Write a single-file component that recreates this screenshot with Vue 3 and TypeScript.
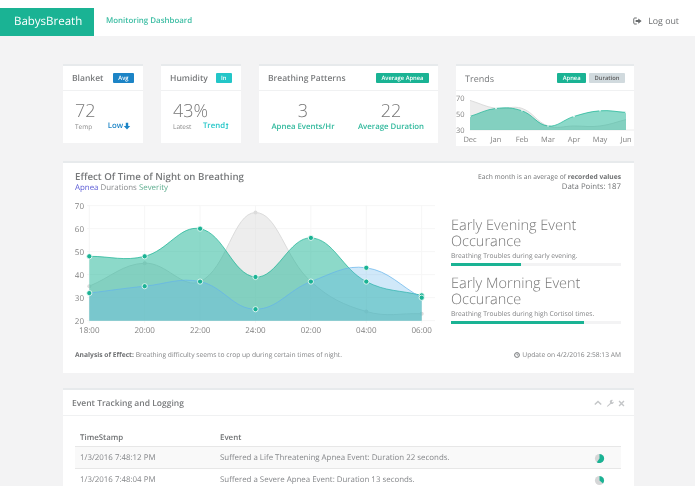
<script setup lang="ts">
type Pt = { x: number; y: number }

function spline(pts: Pt[], t = 0.4, bottom = 9999): string {
  const ctrl = pts.map((p, i) => {
    const prev = pts[i - 1] ?? p
    const next = pts[i + 1] ?? p
    const d1 = Math.hypot(p.x - prev.x, p.y - prev.y)
    const d2 = Math.hypot(next.x - p.x, next.y - p.y)
    const sum = d1 + d2 || 1
    const fa = (t * d1) / sum
    const fb = (t * d2) / sum
    return {
      ix: p.x - fa * (next.x - prev.x),
      iy: Math.min(bottom, p.y - fa * (next.y - prev.y)),
      ox: p.x + fb * (next.x - prev.x),
      oy: Math.min(bottom, p.y + fb * (next.y - prev.y)),
    }
  })
  let d = `M${pts[0].x} ${pts[0].y}`
  for (let i = 1; i < pts.length; i++) {
    d += ` C${ctrl[i - 1].ox} ${ctrl[i - 1].oy} ${ctrl[i].ix} ${ctrl[i].iy} ${pts[i].x} ${pts[i].y}`
  }
  return d
}

function makeSeries(vals: number[], fx: (i: number) => number, fy: (v: number) => number, base: number) {
  const pts = vals.map((v, i) => ({ x: fx(i), y: fy(v) }))
  const line = spline(pts, 0.4, base)
  return {
    pts,
    line,
    area: `${line} L${pts[pts.length - 1].x} ${base} L${pts[0].x} ${base} Z`,
  }
}

const mx = (i: number) => 14.3 + i * 55.4
const my = (v: number) => 122.7 - (v - 20) * 2.3
const mainGray = makeSeries([35, 45, 37, 67, 37, 24, 23], mx, my, 122.7)
const mainGreen = makeSeries([48, 48, 60, 39, 56, 37, 31], mx, my, 122.7)
const mainBlue = makeSeries([32, 35, 37, 25, 37, 43, 30], mx, my, 122.7)
const mainX = ['18:00', '20:00', '22:00', '24:00', '02:00', '04:00', '06:00']
const mainY = [70, 60, 50, 40, 30, 20]

const tx = (i: number) => 14 + i * 26
const ty = (v: number) => 39 - (v - 30) * 0.8
const trendGray = makeSeries([67, 57, 57, 35, 35, 35, 43], tx, ty, 39)
const trendGreen = makeSeries([47, 57, 54, 35, 47, 54, 52], tx, ty, 39)
const trendX = ['Dec', 'Jan', 'Feb', 'Mar', 'Apr', 'May', 'Jun']

function pie(frac: number, r = 5): string {
  const a = frac * 2 * Math.PI
  const x = 6 + r * Math.sin(a)
  const y = 6 - r * Math.cos(a)
  return `M6 6 L6 ${6 - r} A${r} ${r} 0 ${frac > 0.5 ? 1 : 0} 1 ${x} ${y} Z`
}

const rows = [
  { time: '1/3/2016 7:48:12 PM', event: 'Suffered a Life Threatening Apnea Event: Duration 22 seconds.', frac: 0.6 },
  { time: '1/3/2016 7:48:04 PM', event: 'Suffered a Severe Apnea Event: Duration 13 seconds.', frac: 0.36 },
]
</script>

<template>
  <div class="page">
    <header class="nav">
      <div class="brand">BabysBreath</div>
      <div class="nav-title">Monitoring Dashboard</div>
      <div class="logout">
        <svg class="logout-icon" viewBox="0 0 12 10" width="9" height="8">
          <path d="M5 1H2.2C1.5 1 1 1.5 1 2.2v5.6C1 8.500 1.500 9 2.200 9H5" fill="none" stroke="#676a6c" stroke-width="1.300" />
          <path d="M3.500 3.800H7V1.500L11.500 5 7 8.500V6.200H3.500Z" fill="#676a6c" />
        </svg>
        <span>Log out</span>
      </div>
    </header>

    <section class="stats">
      <article class="card small">
        <div class="card-head"><h5>Blanket</h5><span class="tag tag-blue">Avg</span></div>
        <div class="stat-body">
          <div class="stat-left"><div class="big">72</div><div class="tiny">Temp</div></div>
          <div class="trend blue">Low<svg viewBox="0 0 10 10" width="8" height="8"><path d="M3.500 1h3v4h2.500L5 9.500 1 5h2.500Z" fill="#1c84c6" /></svg></div>
        </div>
      </article>
      <article class="card small">
        <div class="card-head"><h5>Humidity</h5><span class="tag tag-info">In</span></div>
        <div class="stat-body">
          <div class="stat-left"><div class="big">43%</div><div class="tiny">Latest</div></div>
          <div class="trend info">Trend<svg viewBox="0 0 6 10" width="4" height="8"><path d="M3 .5 5.500 3.500H4V9.500H.8V8.300H2.500V3.500H1Z" fill="#23c6c8" /></svg></div>
        </div>
      </article>
      <article class="card patterns">
        <div class="card-head"><h5>Breathing Patterns</h5><span class="tag tag-green">Average Apnea</span></div>
        <div class="duo">
          <div class="duo-item"><div class="big">3</div><div class="duo-label">Apnea Events/Hr</div></div>
          <div class="duo-item"><div class="big">22</div><div class="duo-label">Average Duration</div></div>
        </div>
      </article>
      <article class="card trends">
        <div class="card-head">
          <h5 class="light">Trends</h5>
          <div class="tags"><span class="tag tag-green">Apnea</span><span class="tag tag-gray">Duration</span></div>
        </div>
        <svg class="trend-chart" viewBox="0 0 178 55" width="178" height="55">
          <text x="0" y="10" class="tk">70</text>
          <text x="0" y="26" class="tk">50</text>
          <text x="0" y="42" class="tk">30</text>
          <path d="M14 39H178" stroke="#ececec" stroke-width="1" />
          <path :d="trendGray.area" fill="rgba(220,220,220,.5)" stroke="none" />
          <path :d="trendGray.line" fill="none" stroke="#dcdcdc" stroke-width="1" />
          <path :d="trendGreen.area" fill="rgba(26,179,148,.5)" stroke="none" />
          <path :d="trendGreen.line" fill="none" stroke="rgba(26,179,148,.7)" stroke-width="1" />
          <circle v-for="(p, i) in trendGreen.pts" :key="i" :cx="p.x" :cy="p.y" r=".8" fill="#fff" />
          <text v-for="(m, i) in trendX" :key="m" :x="i === 6 ? 170 : tx(i)" y="51" class="tk" text-anchor="middle">{{ m }}</text>
        </svg>
      </article>
    </section>

    <section class="card main">
      <div class="main-head">
        <div>
          <h3>Effect Of Time of Night on Breathing</h3>
          <div class="legend"><span class="c-indigo">Apnea</span> Durations <span class="c-sage">Severity</span></div>
        </div>
        <div class="main-note">
          <div class="note-a">Each month is an average of <b>recorded values</b></div>
          <div class="note-b">Data Points: 187</div>
        </div>
      </div>
      <div class="main-body">
        <svg class="main-chart" viewBox="0 0 360 140" width="360" height="140">
          <g stroke="#f6f6f6" stroke-width="1">
            <path v-for="v in mainY" :key="v" :d="`M12 ${my(v)}H360`" />
            <path v-for="(l, i) in mainX" :key="l" :d="`M${mx(i)} 7V125`" />
          </g>
          <text v-for="v in mainY" :key="v" x="9" :y="my(v) + 3" class="tick" text-anchor="end">{{ v }}</text>
          <text v-for="(l, i) in mainX" :key="l" :x="mx(i)" y="135" class="tick" text-anchor="middle">{{ l }}</text>
          <path :d="mainGray.area" fill="rgba(220,220,220,.5)" />
          <path :d="mainGray.line" fill="none" stroke="#dcdcdc" stroke-width="1" />
          <circle v-for="(p, i) in mainGray.pts" :key="i" :cx="p.x" :cy="p.y" r="2" fill="#dcdcdc" />
          <path :d="mainGreen.area" fill="rgba(26,179,148,.5)" />
          <path :d="mainGreen.line" fill="none" stroke="rgba(26,179,148,.7)" stroke-width="1" />
          <path :d="mainBlue.area" fill="rgba(100,180,235,.3)" />
          <path :d="mainBlue.line" fill="none" stroke="rgba(100,180,235,.7)" stroke-width="1" />
          <circle v-for="(p, i) in mainGreen.pts" :key="i" :cx="p.x" :cy="p.y" r="2.600" fill="#1ab394" stroke="#fff" stroke-width=".8" />
          <circle v-for="(p, i) in mainBlue.pts" :key="i" :cx="p.x" :cy="p.y" r="2.600" fill="#1ab394" stroke="#fff" stroke-width=".8" />
        </svg>
        <div class="side">
          <div class="side-block">
            <h2>Early Evening Event Occurance</h2>
            <small>Breathing Troubles during early evening.</small>
            <div class="bar"><div class="bar-fill" :style="{ width: '41%' }"></div></div>
          </div>
          <div class="side-block">
            <h2>Early Morning Event Occurance</h2>
            <small>Breathing Troubles during high Cortisol times.</small>
            <div class="bar"><div class="bar-fill" :style="{ width: '78%' }"></div></div>
          </div>
        </div>
      </div>
      <div class="main-foot">
        <div><b>Analysis of Effect:</b> Breathing difficulty seems to crop up during certain times of night.</div>
        <div class="update">
          <svg viewBox="0 0 10 10" width="6" height="6"><circle cx="5" cy="5" r="4" fill="none" stroke="#676a6c" stroke-width="1.500" /><path d="M5 2.500V5H7.200" fill="none" stroke="#676a6c" stroke-width="1.100" /></svg>
          Update on 4/2/2016 2:58:13 AM
        </div>
      </div>
    </section>

    <section class="card log">
      <div class="card-head log-head">
        <h5>Event Tracking and Logging</h5>
        <div class="tools">
          <svg viewBox="0 0 10 7" width="8" height="6"><path d="M1 5.500 5 1.500l4 4" fill="none" stroke="#c4c6c8" stroke-width="1.800" /></svg>
          <svg viewBox="0 0 10 10" width="8" height="8"><path d="M1 9.200 5.200 5a2.700 2.700 0 0 1 3.600-3.800L7.200 2.900l.5 1.100 1.100.2L9.600 3a2.700 2.700 0 0 1-3.500 3.200L2 9.800Z" fill="#c4c6c8" /></svg>
          <svg viewBox="0 0 10 10" width="7" height="7"><path d="M1.500 1.500l7 7M8.500 1.500l-7 7" fill="none" stroke="#c4c6c8" stroke-width="2" /></svg>
        </div>
      </div>
      <div class="table-wrap">
        <table>
          <thead><tr><th class="col-time">TimeStamp</th><th>Event</th><th class="col-pie"></th></tr></thead>
          <tbody>
            <tr v-for="r in rows" :key="r.time">
              <td>{{ r.time }}</td>
              <td>{{ r.event }}</td>
              <td class="pie-cell">
                <svg viewBox="0 0 12 12" width="11" height="11">
                  <circle cx="6" cy="6" r="5" fill="#d5d6d7" />
                  <path :d="pie(r.frac)" fill="#1ab394" />
                </svg>
              </td>
            </tr>
          </tbody>
        </table>
      </div>
    </section>
  </div>
</template>

<style scoped>
.page {
  height: 486px;
  overflow: hidden;
  background: #f3f3f4;
  font-family: "Open Sans", "Liberation Sans", sans-serif;
  color: #6f7173;
  font-size: 8px;
  text-rendering: geometricPrecision;
  filter: blur(0.35px);
}
.nav {
  height: 36px;
  padding-top: 8px;
  box-sizing: border-box;
  background: #fff;
  display: flex;
  align-items: stretch;
}
.brand {
  width: 94px;
  box-sizing: border-box;
  padding-left: 14px;
  background: #1ab394;
  color: #fff;
  font-size: 11.500px;
  line-height: 28px;
}
.nav-title {
  margin-left: 12px;
  color: #3cbda3;
  font-size: 7.900px;
  font-weight: 600;
  line-height: 27px;
}
.logout {
  margin-left: auto;
  padding-right: 16px;
  display: flex;
  align-items: center;
  gap: 6px;
  font-size: 8.800px;
  padding-bottom: 2px;
}
.stats {
  display: flex;
  align-items: flex-start;
  gap: 18px;
  padding: 28px 61px 0 63px;
}
.card {
  box-sizing: border-box;
  background: #fff;
  border-top: 2px solid #e7eaec;
}
.small { width: 80px; height: 79px; }
.patterns { width: 179px; height: 79px; }
.trends { width: 178px; height: 82px; }
.card-head {
  height: 24px;
  box-sizing: content-box;
  border-bottom: 1px solid #f0f1f2;
  padding: 0 9px;
  display: flex;
  align-items: center;
  justify-content: space-between;
}
h5 {
  margin: 0;
  font-size: 8.500px;
  font-weight: 600;
  white-space: nowrap;
  color: #77797b;
}
h5.light { font-weight: 400; font-size: 9px; }
.tag {
  font-size: 5.800px;
  font-weight: 600;
  line-height: 10px;
  padding: 0 5.500px;
  border-radius: 1px;
  color: #fff;
  white-space: nowrap;
}
.tag-blue { background: #1c84c6; }
.tag-info { background: #23c6c8; }
.tag-green { background: #1ab394; }
.tag-gray { background: #d1dade; color: #5e5e5e; }
.tags { display: flex; gap: 3px; }
.stat-body {
  display: flex;
  justify-content: space-between;
  align-items: flex-end;
  padding: 10px 12px 0 12px;
}
.stat-left { width: 26px; white-space: nowrap; }
.big {
  font-size: 18px;
  font-weight: 300;
  line-height: 21px;
  color: #777;
}
.tiny { font-size: 6.500px; line-height: 10px; color: #888; }
.trend {
  display: flex;
  align-items: center;
  font-size: 7.800px;
  font-weight: 600;
  line-height: 11px;
}
.trend svg { margin-top: -1px; }
.blue { color: #1c84c6; }
.info { color: #23c6c8; }
.duo {
  display: flex;
  padding: 10px 3px 0 0;
}
.duo-item { text-align: center; flex: 1; }
.duo-label {
  font-size: 7.800px;
  font-weight: 600;
  line-height: 11px;
  color: #2fb89c;
  white-space: nowrap;
}
.trend-chart { display: block; }
.tk { font-size: 7.500px; fill: #808080; font-family: "Open Sans", sans-serif; }
.main {
  margin: 15px 61px 0 63px;
  height: 212px;
  padding: 0 13px 0 12px;
}
.main-head {
  display: flex;
  justify-content: space-between;
  padding-top: 6px;
}
h3 {
  margin: 0;
  font-size: 9.700px;
  font-weight: 600;
  line-height: 15px;
  color: #77797b;
}
.legend { font-size: 7.900px; line-height: 9px; color: #8a8c8e; }
.c-indigo { color: #5b5bd6; }
.c-sage { color: #5fae90; }
.main-note { text-align: right; padding-top: 3px; }
.note-a { font-size: 6.700px; line-height: 10px; }
.note-b { font-size: 7.800px; line-height: 11px; }
.main-body {
  display: flex;
  justify-content: space-between;
  margin-top: 5px;
}
.main-chart { display: block; flex: none; }
.tick { font-size: 8px; fill: #808080; font-family: "Open Sans", sans-serif; }
.side {
  width: 170px;
  padding-top: 20px;
  display: flex;
  flex-direction: column;
  gap: 10px;
}
h2 {
  margin: 0;
  font-size: 14.500px;
  font-weight: 300;
  line-height: 16px;
  color: #777;
}
small { display: block; font-size: 6.700px; line-height: 10px; margin-top: 1px; color: #808284; }
.bar { height: 3px; background: #f3f3f4; margin-top: 2px; }
.bar-fill { height: 100%; background: #1ab394; }
.main-foot {
  display: flex;
  justify-content: space-between;
  margin-top: 12px;
  font-size: 6.700px;
  line-height: 10px;
  color: #808284;
}
.main-foot b { color: #6f7173; }
.update { display: flex; align-items: center; gap: 2px; }
.log { margin: 15px 61px 0 63px; }
.log-head { height: 24px; padding-top: 1px; }
.tools { display: flex; align-items: center; gap: 4px; padding-right: 0; }
.table-wrap { padding: 13px 13px 0 12px; }
table { width: 100%; border-collapse: collapse; font-size: 7.900px; table-layout: fixed; }
th {
  text-align: left;
  font-weight: 600;
  padding: 0 5px;
  height: 17px;
  border-bottom: 1px solid #e7e7e7;
}
td {
  padding: 1px 5px 0;
  height: 20px;
  color: #85878a;
  border-bottom: 1px solid #e7e7e7;
  white-space: nowrap;
}
tbody tr:first-child { background: #f9f9f9; }
.col-time { width: 130px; }
.col-pie { width: 22px; }
.pie-cell svg { display: block; }
</style>
